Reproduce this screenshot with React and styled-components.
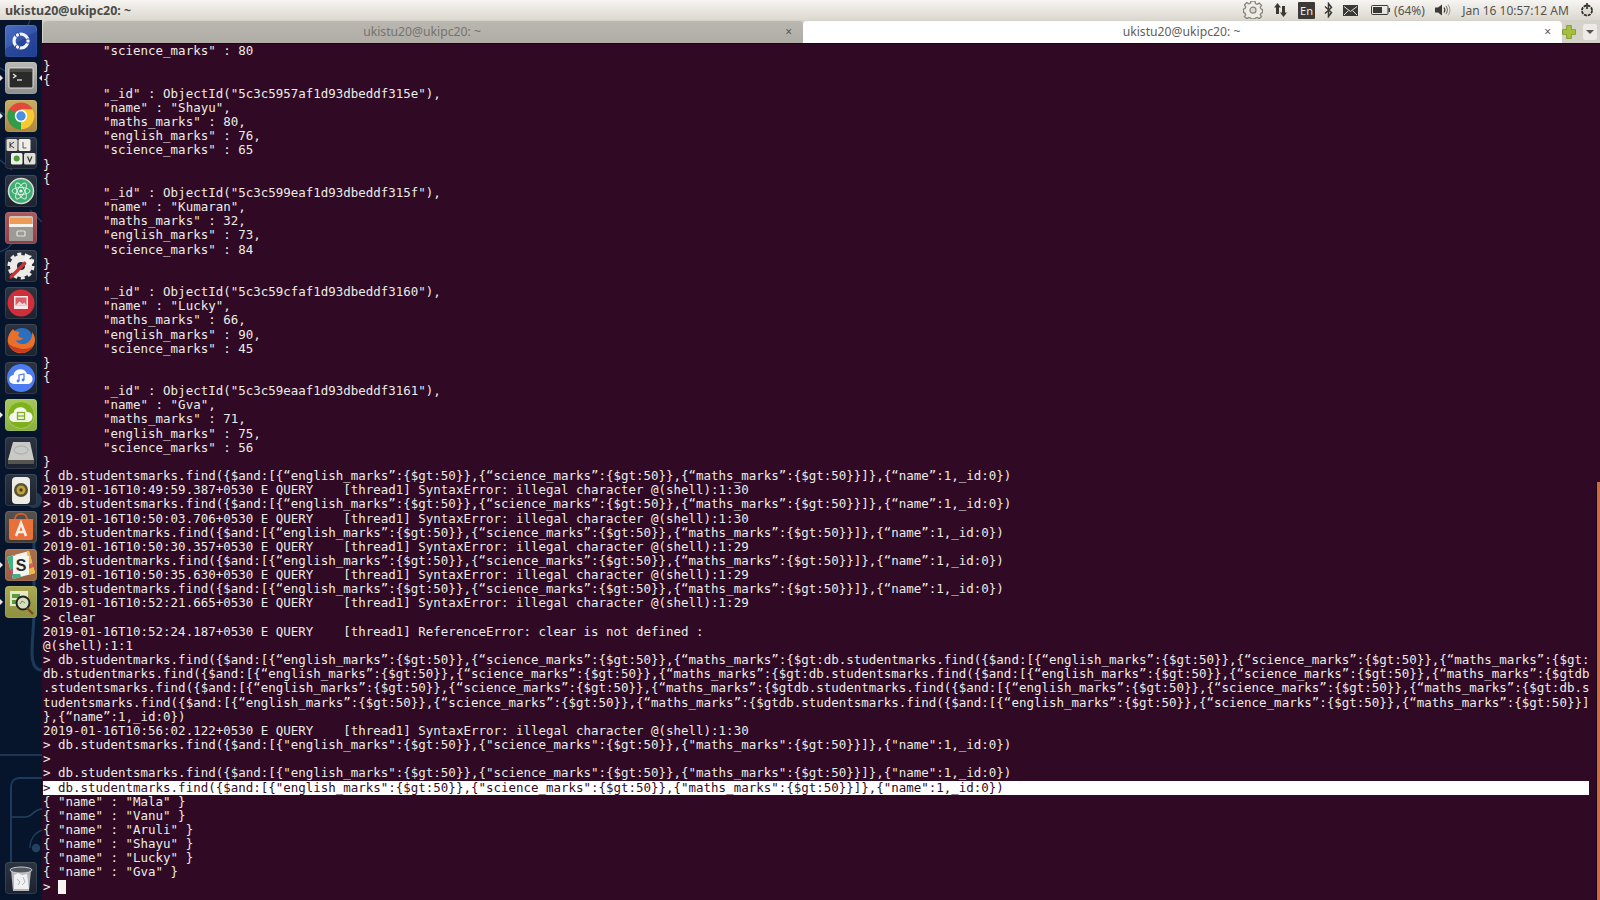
import React from 'react';
import styled, { createGlobalStyle } from 'styled-components';

const GlobalStyle = createGlobalStyle`
  html, body {
    margin: 0;
    padding: 0;
    height: 100%;
    background: #300a24;
  }
`;

const Desktop = styled.div`
  width: 1600px;
  height: 900px;
  display: flex;
  flex-direction: column;
  overflow: hidden;
`;

// top panel
const Panel = styled.div`
  height: 20px;
  flex: none;
  display: flex;
  align-items: center;
  justify-content: space-between;
  padding: 0 5px;
  background: linear-gradient(#f7f5f1, #dcd8d0);
  font-family: "Noto Sans", "Open Sans", sans-serif;
  font-size: 12px;
  color: #55544f;
`;

const PanelTitle = styled.div`
  font-size: 12.4px;
  font-weight: 700;
  color: #4c4b47;
`;

const Tray = styled.div`
  display: flex;
  align-items: center;
  height: 20px;
`;

const TraySlot = styled.div`
  display: flex;
  align-items: center;
  justify-content: center;
  width: ${p => p.$w}px;
  margin-right: ${p => p.$gap || 0}px;
  white-space: nowrap;
`;

const KeyboardBadge = styled.div`
  width: 17px;
  height: 17px;
  background: #3b3a37;
  border-radius: 1px;
  color: #f0eeea;
  font-size: 11px;
  line-height: 17px;
  text-align: center;
`;

const Body = styled.div`
  flex: 1;
  display: flex;
  min-height: 0;
`;

// launcher
const Launcher = styled.div`
  position: relative;
  width: 42px;
  flex: none;
  box-sizing: border-box;
  padding: 5px 0 5px 5px;
  display: flex;
  flex-direction: column;
  gap: 5.43px;
  background: #07152c;
`;

const Wallpaper = styled.svg`
  position: absolute;
  left: 0;
  top: 0;
  width: 42px;
  height: 880px;
`;

const Tile = styled.div`
  position: relative;
  width: 32px;
  height: 32px;
  flex: none;
  border-radius: 4px;
  background: ${p => p.$bg};
  box-shadow: inset 0 0 0 1px rgba(255, 255, 255, 0.1);
  & > svg {
    display: block;
    width: 32px;
    height: 32px;
  }
`;

const TrashTile = styled(Tile)`
  margin-top: auto;
  margin-bottom: 1px;
`;

const Pip = styled.div`
  position: absolute;
  top: 13px;
  ${p => (p.$right ? 'right: -5px;' : 'left: -5px;')}
  width: 0;
  height: 0;
  border-top: 3px solid transparent;
  border-bottom: 3px solid transparent;
  ${p => (p.$right ? 'border-right: 3px solid #e8e8e8;' : 'border-left: 3px solid #e8e8e8;')}
`;

// terminal window
const Main = styled.div`
  flex: 1;
  min-width: 0;
  display: flex;
  flex-direction: column;
`;

const TabBar = styled.div`
  height: 23px;
  flex: none;
  display: flex;
  align-items: flex-end;
  background: #d5d2ca;
  padding-left: 1px;
`;

const Tab = styled.div`
  position: relative;
  width: ${p => (p.$active ? 759 : 760)}px;
  height: 22px;
  flex: none;
  display: flex;
  align-items: center;
  justify-content: center;
  box-sizing: border-box;
  padding-bottom: 2px;
  padding-right: 2px;
  border-radius: 4px 4px 0 0;
  background: ${p => (p.$active ? '#ffffff' : 'linear-gradient(#bab7b0, #b0ada6)')};
  color: ${p => (p.$active ? '#5f5e5a' : '#75736d')};
  font-family: "Noto Sans", "Open Sans", sans-serif;
  font-size: 12.2px;
`;

const TabClose = styled.span`
  position: absolute;
  right: 11px;
  top: 2px;
  font-size: 12px;
  color: #5a5955;
`;

const TabTools = styled.div`
  flex: 1;
  height: 22px;
  display: flex;
  align-items: center;
  gap: 7px;
`;

const TabMenu = styled.div`
  width: 14px;
  height: 16px;
  border-radius: 2px;
  background: #ecebe7;
  display: flex;
  align-items: center;
  justify-content: center;
  &::before {
    content: '';
    border-left: 4px solid transparent;
    border-right: 4px solid transparent;
    border-top: 4px solid #55544f;
  }
`;

const Terminal = styled.div`
  position: relative;
  flex: 1;
  min-height: 0;
  padding: 0.4px 0 0 1px;
  border-top: 1px solid #1c0615;
  background: #300a24;
  font-family: "DejaVu Sans Mono", "Liberation Mono", monospace;
  font-size: 12.47px;
  color: #ecece6;
`;

const Row = styled.div`
  height: 14.17px;
  line-height: 14.17px;
  width: 1546px;
  white-space: pre;
  background: ${p => (p.$selected ? '#ffffff' : 'transparent')};
  color: ${p => (p.$selected ? '#300a24' : 'inherit')};
`;

const Cursor = styled.span`
  display: inline-block;
  width: 8px;
  height: 14px;
  background: #f4f4f0;
  vertical-align: top;
`;

const ScrollThumb = styled.div`
  position: absolute;
  right: 0;
  top: 438px;
  bottom: 0;
  width: 3px;
  background: #d0693f;
  box-shadow: -1px 0 0 #1c0615;
`;

const Q1 = '{“english_marks”:{$gt:50}},{“science_marks”:{$gt:50}},{“maths_marks”:{$gt:50}}]},{“name”:1,_id:0})';
const Q2 = '{"english_marks":{$gt:50}},{"science_marks":{$gt:50}},{"maths_marks":{$gt:50}}]},{"name":1,_id:0})';
const ERR = '[thread1] SyntaxError: illegal character @(shell)';
const E = '{“english_marks”:{$gt:50}},{“science_marks”:{$gt:50}},{“maths_marks”:';

const doc = (id, name, maths, english, science) => [
  `        "_id" : ObjectId("${id}"),`,
  `        "name" : "${name}",`,
  `        "maths_marks" : ${maths},`,
  `        "english_marks" : ${english},`,
  `        "science_marks" : ${science}`,
];

const LINES = [
  '        "science_marks" : 80',
  '}',
  '{',
  ...doc('5c3c5957af1d93dbeddf315e', 'Shayu', 80, 76, 65),
  '}',
  '{',
  ...doc('5c3c599eaf1d93dbeddf315f', 'Kumaran', 32, 73, 84),
  '}',
  '{',
  ...doc('5c3c59cfaf1d93dbeddf3160', 'Lucky', 66, 90, 45),
  '}',
  '{',
  ...doc('5c3c59eaaf1d93dbeddf3161', 'Gva', 71, 75, 56),
  '}',
  `{ db.studentsmarks.find({$and:[${Q1}`,
  `2019-01-16T10:49:59.387+0530 E QUERY    ${ERR}:1:30`,
  `> db.studentsmarks.find({$and:[${Q1}`,
  `2019-01-16T10:50:03.706+0530 E QUERY    ${ERR}:1:30`,
  `> db.studentmarks.find({$and:[${Q1}`,
  `2019-01-16T10:50:30.357+0530 E QUERY    ${ERR}:1:29`,
  `> db.studentmarks.find({$and:[${Q1}`,
  `2019-01-16T10:50:35.630+0530 E QUERY    ${ERR}:1:29`,
  `> db.studentmarks.find({$and:[${Q1}`,
  `2019-01-16T10:52:21.665+0530 E QUERY    ${ERR}:1:29`,
  '> clear',
  '2019-01-16T10:52:24.187+0530 E QUERY    [thread1] ReferenceError: clear is not defined :',
  '@(shell):1:1',
  `> db.studentmarks.find({$and:[${E}{$gt:db.studentmarks.find({$and:[${E}{$gt:`,
  `db.studentmarks.find({$and:[${E}{$gt:db.studentsmarks.find({$and:[${E}{$gtdb`,
  `.studentsmarks.find({$and:[${E}{$gtdb.studentmarks.find({$and:[${E}{$gt:db.s`,
  `tudentsmarks.find({$and:[${E}{$gtdb.studentsmarks.find({$and:[${E}{$gt:50}}]`,
  '},{“name”:1,_id:0})',
  `2019-01-16T10:56:02.122+0530 E QUERY    ${ERR}:1:30`,
  `> db.studentsmarks.find({$and:[${Q2}`,
  '>',
  `> db.studentsmarks.find({$and:[${Q2}`,
];

const RESULTS = ['Mala', 'Vanu', 'Aruli', 'Shayu', 'Lucky', 'Gva'];

const GearOutline = () => (
  <svg width="20" height="18" viewBox="0 0 20 18">
    <path
      d="M8 .8h4l.5 2.300 1.700.8 2-1.200 2.300 2.300-1.200 2 .7 1.600 1.500.5v3.200l-1.500.5-.7 1.600 1.200 1.900-2.300 1.900-2-1.200-1.700.6-.5.9H8l-.5-.9-1.700-.6-2 1.200-2.300-1.900 1.200-1.900-.7-1.600L.5 11.800V8.600L2 8.100l.7-1.600-1.200-2 2.300-2.300 2 1.200 1.700-.8z"
      transform="translate(0 -.6)"
      fill="#efece6"
      stroke="#85837c"
      strokeWidth="1.300"
    />
    <circle cx="10" cy="9.200" r="3" fill="#dcd8d0" stroke="#85837c" strokeWidth="1.200" />
  </svg>
);

const NetArrows = () => (
  <svg width="15" height="16" viewBox="0 0 15 16">
    <path d="M4.500 1 8 5.500H6V12H3V5.500H1z" fill="#3a3936" />
    <path d="M10.500 15 14 10.500H12V4H9v6.500H7z" fill="#3a3936" />
  </svg>
);

const Bluetooth = () => (
  <svg width="9" height="16" viewBox="0 0 9 16">
    <path d="M1 4.500 7.500 10.500 4.500 14.500V1.500L7.500 5.500 1 11.500" fill="none" stroke="#3a3936" strokeWidth="1.500" />
  </svg>
);

const Mail = () => (
  <svg width="15" height="11" viewBox="0 0 15 11">
    <rect width="15" height="11" fill="#3a3936" />
    <path d="M1 1.500 7.500 6.500 14 1.500M1 10 5.500 5.500M14 10 9.500 5.500" fill="none" stroke="#e2dfd8" strokeWidth="1" />
  </svg>
);

const Battery = () => (
  <svg width="19" height="10" viewBox="0 0 19 10">
    <rect x=".5" y=".5" width="16.500" height="9" rx="1" fill="none" stroke="#3a3936" />
    <rect x="2" y="2" width="9" height="6" fill="#3a3936" />
    <rect x="17.500" y="3" width="1.500" height="4" fill="#3a3936" />
  </svg>
);

const Volume = () => (
  <svg width="16" height="14" viewBox="0 0 16 14">
    <path d="M0 4.500h3L7 1.500v11L3 9.500H0z" fill="#3a3936" />
    <path d="M9 4.500c1 1.400 1 3.600 0 5" fill="none" stroke="#3a3936" strokeWidth="1.200" />
    <path d="M11 3c1.700 2.400 1.700 5.600 0 8" fill="none" stroke="#77756f" strokeWidth="1.100" />
    <path d="M13 1.500c2.400 3.400 2.400 7.600 0 11" fill="none" stroke="#a5a29b" strokeWidth="1.100" />
  </svg>
);

const PowerGear = () => (
  <svg width="16" height="16" viewBox="0 0 16 16">
    <circle cx="8" cy="8.500" r="5" fill="none" stroke="#2f2e2b" strokeWidth="1.800" strokeDasharray="3 .9" />
    <circle cx="8" cy="8.500" r="3.200" fill="#dcd8d0" />
    <rect x="7.200" y="1" width="1.600" height="6" fill="#2f2e2b" />
  </svg>
);

const PlusIcon = () => (
  <svg width="14" height="14" viewBox="0 0 15 15">
    <path d="M5 .5h5v4.500h4.500v5H10v4.500H5V10H.5V5H5z" fill="#a5c13c" stroke="#7f9a2a" />
  </svg>
);

const Wall = () => (
  <Wallpaper viewBox="0 0 42 880">
    <g fill="none" stroke="#23415f" strokeWidth="1.300">
      <path d="M0 48 14 56M30 0l-3 8M0 140l12 10M30 190l12 12M0 92l10 5" />
      <path d="M24 210 L8 228 0 232" />
      <path d="M42 650c-16 0-8-30-8-60V500" strokeWidth="3" stroke="#1c3a5c" />
      <path d="M0 735H42" />
      <path d="M42 758H20c-6 0-9 4-9 9v100" strokeWidth="2" stroke="#1e3a5a" />
      <path d="M12 797h14c6 0 8-8 16-8" strokeWidth="1.600" />
      <circle cx="36" cy="828" r="3.500" fill="#23415f" />
      <path d="M42 810 a18 18 0 0 0 -12 18" />
    </g>
    <circle cx="34" cy="480" r="8" fill="#33506e" opacity=".6" />
  </Wallpaper>
);

const UbuntuTile = () => (
  <svg viewBox="0 0 32 32">
    <path d="M0 24 32 6V32H0z" fill="#1f3d8f" opacity=".6" />
    <circle cx="16" cy="16" r="7" fill="none" stroke="#f2f4fa" strokeWidth="3.200" />
    <circle cx="23" cy="16" r="2.200" fill="#f2f4fa" stroke="#2f4da3" />
    <circle cx="12.500" cy="10" r="2.200" fill="#f2f4fa" stroke="#2f4da3" />
    <circle cx="12.500" cy="22" r="2.200" fill="#f2f4fa" stroke="#2f4da3" />
  </svg>
);

const TerminalTile = () => (
  <svg viewBox="0 0 32 32">
    <rect x="4" y="6" width="24" height="20" rx="1" fill="#2a2a28" stroke="#e2e2df" />
    <rect x="5" y="7" width="22" height="3" fill="#4a4a47" />
    <path d="M8 12l3 2-3 2" fill="none" stroke="#f0f0ee" strokeWidth="1.200" />
    <path d="M12 18h5" stroke="#f0f0ee" strokeWidth="1.200" />
  </svg>
);

const ChromeTile = () => (
  <svg viewBox="0 0 32 32">
    <circle cx="16" cy="16" r="13.500" fill="#df4a3a" />
    <path d="M16 16 4.300 9.300A13.500 13.500 0 0 0 16 29.500l6-6z" fill="#2f9e4a" />
    <path d="M16 16 16 29.500A13.500 13.500 0 0 0 27.700 9.300H16z" fill="#f5c92f" />
    <circle cx="16" cy="16" r="6.200" fill="#ffffff" />
    <circle cx="16" cy="16" r="4.700" fill="#4a8fe0" />
  </svg>
);

const KeysTile = () => (
  <svg viewBox="0 0 32 32">
    <rect x="1.500" y="2" width="11" height="12" rx="1.500" fill="#dedcd4" />
    <rect x="13.500" y="2" width="12" height="12" rx="1.500" fill="#f0eee6" />
    <rect x="6" y="16" width="11.500" height="11.500" rx="1.500" fill="#f0eee6" />
    <rect x="19" y="16" width="11.500" height="11.500" rx="1.500" fill="#e0ded6" />
    <path d="M5 5v6M9 5 5 8l4 3" fill="none" stroke="#333" strokeWidth="1" />
    <path d="M18 5v6h3.500" fill="none" stroke="#555" strokeWidth="1" />
    <circle cx="11.700" cy="21.500" r="3" fill="#4f9a3a" />
    <path d="M22.500 19.500l2.200 5 2.200-5" fill="none" stroke="#333" strokeWidth="1.200" />
  </svg>
);

const AtomTile = () => (
  <svg viewBox="0 0 32 32">
    <circle cx="16" cy="16" r="12.500" fill="#3fae72" stroke="#d8dcd6" strokeWidth="1.500" />
    <g fill="none" stroke="#dff3e6" strokeWidth=".9">
      <ellipse cx="16" cy="16" rx="9" ry="3.500" />
      <ellipse cx="16" cy="16" rx="9" ry="3.500" transform="rotate(60 16 16)" />
      <ellipse cx="16" cy="16" rx="9" ry="3.500" transform="rotate(120 16 16)" />
    </g>
    <circle cx="16" cy="16" r="1.600" fill="#eaf8ef" />
  </svg>
);

const CabinetTile = () => (
  <svg viewBox="0 0 32 32">
    <rect x="4" y="4" width="24" height="25" rx="2" fill="#c9c7c2" />
    <rect x="5" y="6" width="22" height="6" fill="#ee9a55" />
    <rect x="4" y="12" width="24" height="3" fill="#f2f1ec" />
    <rect x="4" y="15" width="24" height="14" fill="#9b9a95" />
    <rect x="12" y="19" width="8" height="5" rx="1" fill="none" stroke="#e4e3de" strokeWidth="1.200" />
  </svg>
);

const SettingsTile = () => (
  <svg viewBox="0 0 32 32">
    <circle cx="16" cy="16" r="7.500" fill="none" stroke="#ecebe8" strokeWidth="7" />
    <circle cx="16" cy="16" r="12" fill="none" stroke="#ecebe8" strokeWidth="3" strokeDasharray="4 3.500" />
    <path d="M6 27 20 13" stroke="#cf3030" strokeWidth="3.200" strokeLinecap="round" />
    <path d="M19 10c0-3 4-6 8-4l-3 3 2 2 3-2c1 4-3 7-6 6z" fill="#f4f3f0" />
  </svg>
);

const PictureTile = () => (
  <svg viewBox="0 0 32 32">
    <circle cx="16" cy="16" r="13.500" fill="#cf2f3a" />
    <rect x="9" y="9" width="14" height="13" fill="#f3e9e9" />
    <rect x="10.500" y="10.500" width="11" height="8" fill="#d9606a" />
    <path d="M10.500 18.500l4-4 3 2.500 2-1.500 2 3z" fill="#f3d6d6" />
  </svg>
);

const FirefoxTile = () => (
  <svg viewBox="0 0 32 32">
    <circle cx="17" cy="15" r="11" fill="#2a6fc0" />
    <path d="M8 5c-4 4-6 9-5 14 2 7 8 11 15 10 7-1 12-7 12-13 0-3-1-6-3-8 1 5-2 11-8 12-4 .5-7-1-8-4 3 1 6 0 7-2-3 0-5-2-5-3 1-1 2-2 1-3-3-1-5-1-6-3z" fill="#e8702a" />
    <path d="M3 19c2 7 8 10 15 10 5-1 8-4 10-7-4 3-10 4-15 2-5-1-8-3-10-5z" fill="#c93a1e" />
  </svg>
);

const MusicCloudTile = () => (
  <svg viewBox="0 0 32 32">
    <circle cx="16" cy="16" r="14" fill="#4d7cf0" />
    <path d="M9 22a4.500 4.500 0 0 1-.500-9 7 7 0 0 1 13.500-1 5 5 0 0 1 1 10z" fill="#ffffff" />
    <path d="M14 19v-6l5-1v6" fill="none" stroke="#4d7cf0" strokeWidth="1.200" />
    <circle cx="13" cy="19" r="1.400" fill="#4d7cf0" />
    <circle cx="18" cy="18" r="1.400" fill="#4d7cf0" />
  </svg>
);

const DownloadCloudTile = () => (
  <svg viewBox="0 0 32 32">
    <circle cx="16" cy="16" r="13.500" fill="#7fb01d" stroke="#a8cc55" />
    <path d="M9 23a4.500 4.500 0 0 1-.500-9 7 7 0 0 1 13.500-1 5 5 0 0 1 1 10z" fill="#f4f8ea" />
    <rect x="12.500" y="13.500" width="7" height="7" fill="none" stroke="#7fb01d" strokeWidth="1.300" />
    <path d="M12.500 17h7" stroke="#7fb01d" strokeWidth="1.300" />
  </svg>
);

const DiskTile = () => (
  <svg viewBox="0 0 32 32">
    <path d="M8 5h17l4 18v4H3v-4z" fill="#c9c9c6" />
    <path d="M3 23h26v4H3z" fill="#55544f" />
    <ellipse cx="16" cy="13" rx="7" ry="4" fill="none" stroke="#a9a9a6" />
  </svg>
);

const SpeakerTile = () => (
  <svg viewBox="0 0 32 32">
    <rect x="7" y="3" width="18" height="27" rx="4" fill="#ecece4" />
    <circle cx="16" cy="16" r="7" fill="#5a5236" />
    <circle cx="16" cy="16" r="4.500" fill="#c1a13a" />
    <circle cx="16" cy="16" r="1.700" fill="#4a4226" />
  </svg>
);

const BagTile = () => (
  <svg viewBox="0 0 32 32">
    <path d="M4 8h24v19c0 1-1 2-2 2H6c-1 0-2-1-2-2z" fill="#e8713a" />
    <path d="M10 8c0-7 12-7 12 0" fill="none" stroke="#cf5f2f" strokeWidth="2" />
    <path d="M11 25 16 12l5 13M13 21h6" fill="none" stroke="#fbeee6" strokeWidth="2.600" />
  </svg>
);

const SlackTile = () => (
  <svg viewBox="0 0 32 32">
    <path d="M2 8 24 2l6 22-22 6z" fill="#f4f2ee" />
    <path d="M2 8 10 6l6 22-8 2z" fill="#2fa87f" opacity=".9" />
    <path d="M22 3l2-1 6 22-6 2z" fill="#f0b93a" />
    <path d="M4 21l24-7 1 4L6 26z" fill="#d93a62" opacity=".75" />
    <rect x="8" y="7" width="16" height="18" fill="#f6f4ef" />
    <text x="16" y="22" textAnchor="middle" fontFamily="Liberation Sans" fontWeight="700" fontSize="16" fill="#2a2a2a">S</text>
  </svg>
);

const InspectTile = () => (
  <svg viewBox="0 0 32 32">
    <rect x="5" y="5" width="18" height="15" fill="#e6e8c8" />
    <rect x="7" y="8" width="8" height="4" fill="#5d9a3a" />
    <rect x="7" y="14" width="6" height="4" fill="#5d9a3a" />
    <circle cx="18" cy="17" r="6.500" fill="#d8dcc0" stroke="#222" strokeWidth="2" />
    <path d="M22 22l6 6" stroke="#7a4a20" strokeWidth="2.400" />
    <path d="M15 18l2-3 3 2" fill="none" stroke="#5d9a3a" />
  </svg>
);

const TrashIcon = () => (
  <svg viewBox="0 0 32 32">
    <path d="M6 8h20l-2 21H8z" fill="#b5b7ba" />
    <ellipse cx="16" cy="8" rx="11" ry="3" fill="#55585c" stroke="#c9cbce" />
    <path d="M9 13l4-2 4 2 5-1 2 15H9z" fill="#eef0f2" />
    <path d="M12 17l3 3-2 3M18 15l2 5-3 3" fill="none" stroke="#b4b6ba" />
  </svg>
);

const DARK = 'linear-gradient(#2c3442, #1b2230)';

const TILES = [
  { bg: 'linear-gradient(135deg, #4a6ec4, #223f96)', icon: <UbuntuTile /> },
  { bg: 'linear-gradient(#b9b9b6, #8f8f8c)', icon: <TerminalTile />, pip: true, rightPip: true },
  { bg: 'linear-gradient(#c9ad66, #a8873e)', icon: <ChromeTile />, pip: true },
  { bg: DARK, icon: <KeysTile /> },
  { bg: DARK, icon: <AtomTile /> },
  { bg: 'linear-gradient(#a85a5e, #8d3f46)', icon: <CabinetTile /> },
  { bg: DARK, icon: <SettingsTile /> },
  { bg: DARK, icon: <PictureTile /> },
  { bg: DARK, icon: <FirefoxTile /> },
  { bg: DARK, icon: <MusicCloudTile /> },
  { bg: 'linear-gradient(#a7c75e, #8bb03f)', icon: <DownloadCloudTile />, pip: true },
  { bg: DARK, icon: <DiskTile /> },
  { bg: DARK, icon: <SpeakerTile /> },
  { bg: 'linear-gradient(#57524e, #3f3a38)', icon: <BagTile /> },
  { bg: 'linear-gradient(#a86f4e, #95603f)', icon: <SlackTile />, pip: true },
  { bg: 'linear-gradient(#a9aa52, #8f9040)', icon: <InspectTile />, pip: true },
];

export default function App() {
  return (
    <Desktop>
      <GlobalStyle />
      <Panel>
        <PanelTitle>ukistu20@ukipc20: ~</PanelTitle>
        <Tray>
          <TraySlot $w={20} $gap={10}><GearOutline /></TraySlot>
          <TraySlot $w={15} $gap={10}><NetArrows /></TraySlot>
          <TraySlot $w={17} $gap={9}><KeyboardBadge>En</KeyboardBadge></TraySlot>
          <TraySlot $w={9} $gap={10}><Bluetooth /></TraySlot>
          <TraySlot $w={15} $gap={13}><Mail /></TraySlot>
          <TraySlot $w={19} $gap={3}><Battery /></TraySlot>
          <TraySlot $w={33} $gap={9}>(64%)</TraySlot>
          <TraySlot $w={16} $gap={11}><Volume /></TraySlot>
          <TraySlot $w={107} $gap={10}>Jan 16 10:57:12 AM</TraySlot>
          <TraySlot $w={16}><PowerGear /></TraySlot>
        </Tray>
      </Panel>
      <Body>
        <Launcher>
          <Wall />
          {TILES.map((t, i) => (
            <Tile key={i} $bg={t.bg}>
              {t.pip && <Pip />}
              {t.rightPip && <Pip $right />}
              {t.icon}
            </Tile>
          ))}
          <TrashTile $bg={DARK}><TrashIcon /></TrashTile>
        </Launcher>
        <Main>
          <TabBar>
            <Tab>ukistu20@ukipc20: ~<TabClose>×</TabClose></Tab>
            <Tab $active>ukistu20@ukipc20: ~<TabClose>×</TabClose></Tab>
            <TabTools>
              <PlusIcon />
              <TabMenu />
            </TabTools>
          </TabBar>
          <Terminal>
            {LINES.map((line, i) => <Row key={i}>{line}</Row>)}
            <Row $selected>{`> db.studentmarks.find({$and:[${Q2}`}</Row>
            {RESULTS.map(name => <Row key={name}>{`{ "name" : "${name}" }`}</Row>)}
            <Row>{'> '}<Cursor /></Row>
            <ScrollThumb />
          </Terminal>
        </Main>
      </Body>
    </Desktop>
  );
}
